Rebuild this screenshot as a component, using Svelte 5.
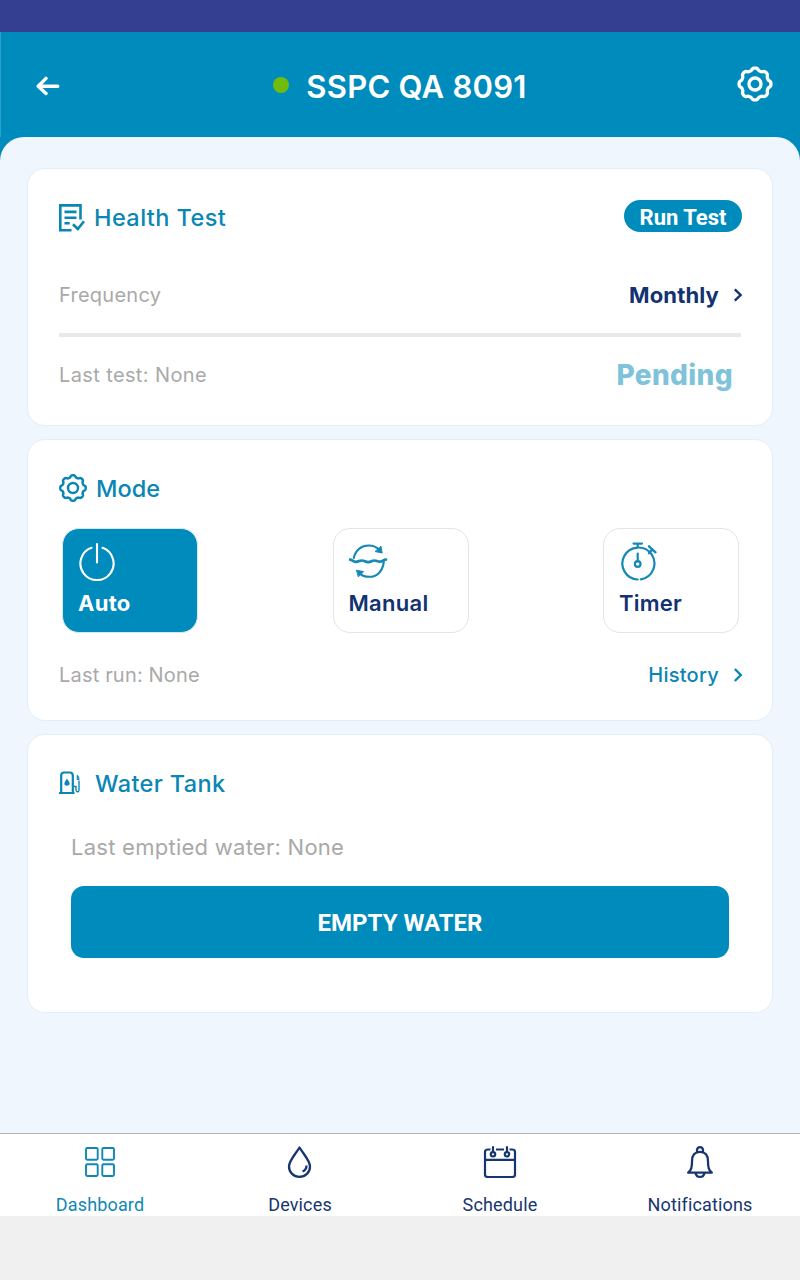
<script>
  function gearPath(c, r, a) {
    let d = '';
    for (let i = 0; i < 160; i++) {
      const t = (i / 160) * Math.PI * 2;
      const rr = r + a * Math.tanh(1.6 * Math.cos(8 * t) + 0.15);
      d += (i ? 'L' : 'M') + (c + rr * Math.cos(t)).toFixed(2) + ' ' + (c + rr * Math.sin(t)).toFixed(2);
    }
    return d + 'Z';
  }
  const headerGear = gearPath(18, 14.8, 1.2);
  const modeGear = gearPath(14, 11.7, 1.1);
</script>

<div class="screen">
  <div class="status"></div>
  <header>
    <svg class="back" width="24" height="20" viewBox="0 0 24 20" fill="none" stroke="#fff" stroke-width="3.4" stroke-linecap="round" stroke-linejoin="round"><path d="M10 2.400 2.200 10.300l7.800 7.200M3 10.300h18.800" /></svg>
    <div class="title"><span class="dot"></span><h1>SSPC QA 8091</h1></div>
    <svg class="gear" width="36" height="36" viewBox="0 0 36 36" fill="none" stroke="#fff" stroke-width="3.3" stroke-linejoin="round"><path d={headerGear} /><circle cx="18" cy="18" r="6" /></svg>
  </header>

  <main>
    <section class="health">
      <div class="head">
        <svg width="26" height="28" viewBox="0 0 26 28" fill="none" stroke="#0a86b3" stroke-width="2.6"><path d="M21.500 15.500V1.400H1.300v24.900h11.200M5.500 7.900h12M5.500 13.700h12M5.500 19.300h5.200M14 20.300l4.800 4.700 6.200-7.800" /></svg>
        <h2 class="t-health">Health Test</h2>
        <button class="run">Run Test</button>
      </div>
      <div class="row freq">
        <span class="muted m-freq">Frequency</span>
        <span class="value">Monthly</span>
        <svg class="chev" width="10" height="14" viewBox="0 0 10 14" fill="none" stroke="#123272" stroke-width="2.4"><path d="M1.800 1.400 7.600 7l-5.800 5.600" /></svg>
      </div>
      <div class="rule"></div>
      <div class="row last">
        <span class="muted m-test">Last test: None</span>
        <span class="pending">Pending</span>
      </div>
    </section>

    <section class="mode">
      <div class="head">
        <svg class="mode-icon" width="28" height="28" viewBox="0 0 28 28" fill="none" stroke="#0a86b3" stroke-width="2.5" stroke-linejoin="round"><path d={modeGear} /><circle cx="14" cy="14" r="5" /></svg>
        <h2 class="t-mode">Mode</h2>
      </div>
      <div class="tiles">
        <div class="tile on">
          <svg width="40" height="40" viewBox="0 0 40 40" fill="none" stroke="#fff" stroke-width="2.1" stroke-linecap="round"><path d="M13.500 5.800A16.600 16.600 0 1 0 24.500 5.800M19 2v18.500" /></svg>
          <span class="n-auto">Auto</span>
        </div>
        <div class="tile">
          <svg width="40" height="40" viewBox="0 0 40 40" fill="none" stroke="#1489b5" stroke-width="2.100" stroke-linecap="round" stroke-linejoin="round"><path d="M4.800 16C6.500 7.500 13 3.500 19.500 3.500c5 0 8.500 1.800 11 4.600M34.800 20C33.500 30 27.500 34.800 20.300 34.800c-4.800 0-8.500-1.800-10.500-4.300" /><path d="m32 4.500 1.200 6.500-6.800-1.400zM7.800 28.300l6.800 1.300-5 5z" fill="#1489b5" stroke-width="1" /><path d="M1 17.600c2.400 0 2.800 2.200 5.500 2.200 3 0 3.700-1.300 6.400-1.300s3.400 1.700 6.300 1.700 3.500-1.700 6.100-1.700 2.800 1.200 5.500 1.200c3.200 0 3.300-2.100 6.200-2.100" stroke-width="2.700" /></svg>
          <span class="n-manual">Manual</span>
        </div>
        <div class="tile">
          <svg width="40" height="40" viewBox="0 0 40 40" fill="none" stroke="#1489b5" stroke-width="2.200" stroke-linecap="round"><path d="M18.700 37.500A16 16 0 1 1 22 37.300" /><path d="M14.500 1.600h8.500M18.700 1.600v3.600M18.700 11.500v8" /><circle cx="18.700" cy="22" r="2.800" /><path d="m30 4.300 6.500 6M33.200 7.500l-3.200 3.700" stroke-width="2.400" /></svg>
          <span class="n-timer">Timer</span>
        </div>
      </div>
      <div class="row hist">
        <span class="muted m-run">Last run: None</span>
        <span class="link">History</span>
        <svg class="chev" width="10" height="14" viewBox="0 0 10 14" fill="none" stroke="#0a86b3" stroke-width="2.4"><path d="M1.800 1 7.800 7l-6 6" /></svg>
      </div>
    </section>

    <section class="tank">
      <div class="head">
        <svg class="tank-icon" width="22" height="24" viewBox="0 0 22 24" fill="none" stroke="#0a86b3"><path d="M2.200 21.500V4.500q0-3 3-3h5.600q3 0 3 3v17M0 22h15.500" stroke-width="2.200" /><path d="M8 7.800q3.400 4.200 2.400 5.700-2.400 2.600-4.800 0Q4.600 12 8 7.800Z" fill="#0a86b3" stroke="none" /><path d="M20 9.500v9.500q-.2 2-1.800 1.800-1.200-.3-1.200-2v-3.300h-2.500" stroke-width="1.400" /><path d="m18 4 1.800 2.500v2h-1.500V5" stroke-width="1.100" /></svg>
        <h2 class="t-tank">Water Tank</h2>
      </div>
      <p>Last emptied water: None</p>
      <button class="empty">EMPTY WATER</button>
    </section>
  </main>

  <nav>
    <div class="tab active">
      <svg width="36" height="36" viewBox="0 0 36 36" fill="none" stroke="#1088b4" stroke-width="1.900"><rect x="4" y="3" width="11.700" height="11.700" rx="1.200" /><rect x="20.300" y="3" width="11.700" height="11.700" rx="1.200" /><rect x="4" y="19.300" width="11.700" height="11.700" rx="1.200" /><rect x="20.300" y="19.300" width="11.700" height="11.700" rx="1.200" /></svg>
      <span class="l-dash">Dashboard</span>
    </div>
    <div class="tab">
      <svg width="36" height="36" viewBox="0 0 36 36" fill="none" stroke="#17356f" stroke-width="2.300" stroke-linejoin="round"><path d="M17.500 2.500C14 8.500 7 15.500 7 21.500c0 6 4.700 10.300 10.500 10.300s10.500-4.300 10.500-10.300C28 15.500 21 8.500 17.500 2.500Z" /><path d="M24.500 20.500c0 3-1.500 5-4 6" /></svg>
      <span class="l-dev">Devices</span>
    </div>
    <div class="tab">
      <svg width="36" height="36" viewBox="0 0 36 36" fill="none" stroke="#17356f" stroke-width="2.200"><path d="M8.500 4.500H6Q3 4.500 3 7v22.500Q3 32 5.500 32h25q2.500 0 2.500-2.500V7q0-2.500-3-2.500h-2.500M14 4.500h8M3 14.800h30M11 1.200v6M25 1.200v6" /><circle cx="11" cy="9.300" r="2.200" /><circle cx="25" cy="9.300" r="2.200" /></svg>
      <span class="l-sch">Schedule</span>
    </div>
    <div class="tab">
      <svg width="36" height="36" viewBox="0 0 36 36" fill="none" stroke="#17356f" stroke-width="2.300" stroke-linejoin="round"><path d="M18 6.800c-5.500 0-8 4-8 9.500 0 6-.5 8.200-3.800 11.400h23.600c-3.300-3.200-3.800-5.400-3.800-11.400 0-5.500-2.500-9.500-8-9.500ZM15 7V5q.3-2.900 3-2.900T21 5v2M13.500 27.900q.8 4 4.500 4t4.500-4" /></svg>
      <span class="l-not">Notifications</span>
    </div>
  </nav>
  <div class="foot"></div>
</div>

<style>
  :global(body) { margin: 0; }
  .screen { width: 800px; height: 1280px; display: flex; flex-direction: column; background: #008bbd; font-family: Inter, "Liberation Sans", sans-serif; overflow: hidden; }
  h1, h2, p { margin: 0; }
  svg { display: block; flex: none; }
  button { border: 0; padding: 0; background: #008bbd; color: #fff; font-family: Roboto, sans-serif; font-weight: 700; }
  .status { height: 32px; background: #343f92; flex: none; }
  header { height: 105px; flex: none; box-sizing: border-box; display: flex; justify-content: space-between; padding: 0 27px 0 36px; border-left: 1px solid #2aa0cb; }
  .back { margin-top: 44px; margin-left: -1px; }
  .title { display: flex; margin-left: 3px; }
  .dot { width: 16px; height: 16px; border-radius: 50%; background: #71bb0c; margin: 45px 17px 0 0; }
  h1 { font-size: 31px; line-height: 40px; margin-top: 35px; font-weight: 600; color: #fff; letter-spacing: 0.25px; white-space: nowrap; }
  .gear { margin-top: 34px; }
  main { flex: 1; background: #eff6fd; border-radius: 24px 24px 0 0; padding: 31px 27px 0; display: flex; flex-direction: column; gap: 13px; }
  section { box-sizing: border-box; background: #fff; border: 1px solid #e1effa; border-radius: 18px; padding: 0 30px 0 31px; flex: none; }
  .health { height: 258px; }
  .mode { height: 282px; }
  .tank { height: 279px; }
  .head { display: flex; align-items: center; height: 34px; margin-top: 32px; }
  h2 { font-size: 23.500px; line-height: 34px; font-weight: 500; color: #0a86b3; white-space: nowrap; }
  .t-health { margin-left: 9px; letter-spacing: 0.42px; }
  .t-mode { margin-left: 9px; }
  .mode-icon { margin-top: -2px; }
  .tank-icon { margin-top: -2px; }
  .t-tank { margin-left: 14px; letter-spacing: 0.38px; }
  .run { margin-left: auto; width: 118px; height: 32px; border-radius: 16px; font-size: 22px; line-height: 35px; margin-top: -5px; }
  .row { display: flex; align-items: center; height: 30px; white-space: nowrap; }
  .muted { color: #a9a9a9; font-size: 20px; margin-right: auto; }
  .m-freq { letter-spacing: 0.25px; }
  .m-test { letter-spacing: 0.38px; }
  .m-run { letter-spacing: 0.18px; }
  .freq { margin-top: 45px; }
  .value { font-size: 22px; font-weight: 700; color: #123272; letter-spacing: 0.15px; }
  .chev { margin: -1px -1px 0 14px; }
  .rule { height: 4px; background: #e8e9e9; margin: 23px 1px 0 0; }
  .last { margin-top: 23px; }
  .pending { font-size: 28px; font-weight: 800; color: #7fc3da; margin-right: 9px; letter-spacing: 0.35px; }
  .tiles { display: flex; justify-content: space-between; margin: 22px 3px 0; }
  .tile { box-sizing: border-box; width: 136px; height: 105px; border: 1px solid #e2e4e6; border-radius: 17px; padding: 13px 15px 0; color: #123272; font-size: 22px; font-weight: 600; line-height: 30px; }
  .tile span { display: block; margin-top: 6px; }
  .n-auto { letter-spacing: 0.3px; font-weight: 700; }
  .n-manual { letter-spacing: 0.3px; }
  .n-timer { letter-spacing: 0.2px; }
  .tile.on { background: #008bbd; border-color: #d5e9f2; color: #fff; }
  .hist { margin-top: 27px; }
  .link { font-size: 20px; font-weight: 500; color: #0a86b3; letter-spacing: 0.25px; }
  .tank p { margin: 30px 0 0 12px; font-size: 22px; line-height: 32px; color: #a9a9a9; letter-spacing: 0.26px; }
  .empty { display: block; width: 658px; height: 72px; border-radius: 13px; margin: 23px 0 0 12px; font-size: 24px; line-height: 74px; }
  nav { height: 83px; box-sizing: border-box; border-top: 1px solid #aeb3bb; background: #fff; display: grid; grid-template-columns: repeat(4, 1fr); flex: none; }
  .tab { display: flex; flex-direction: column; align-items: center; padding-top: 11px; color: #17356f; font: 400 18px/24px Roboto, sans-serif; }
  .tab.active { color: #1088b4; }
  .tab span { margin-top: 12px; letter-spacing: 0.15px; }
  .foot { height: 64px; background: #f0f0f0; flex: none; }
</style>
